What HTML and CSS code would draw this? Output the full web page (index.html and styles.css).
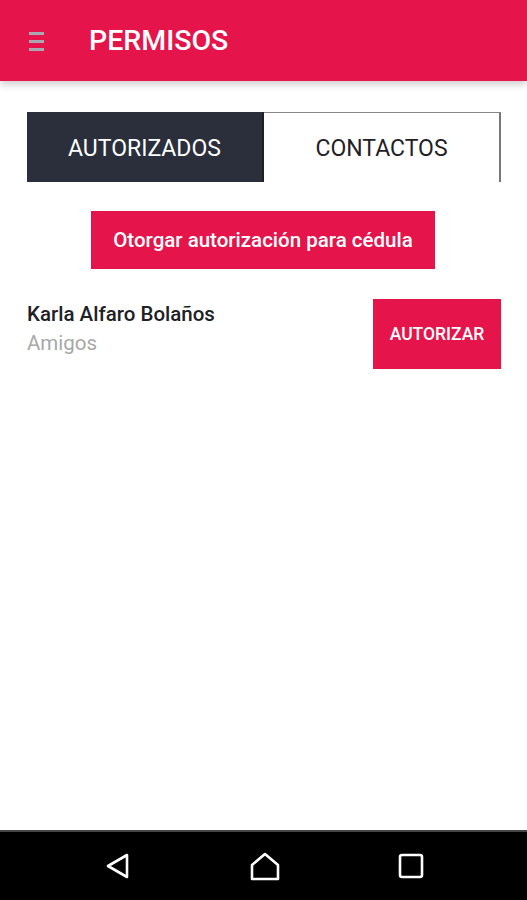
FILE: index.html
```html
<!DOCTYPE html>
<html lang="es">
<head>
    <meta charset="UTF-8">
    <meta name="viewport" content="width=device-width, initial-scale=1.0">
    <title>Permisos</title>
    <link rel="stylesheet" href="styles.css">
</head>
<body>
    <div class="screen">
        <header class="app-bar">
            <div class="menu-icon">
                <span></span>
                <span></span>
                <span></span>
            </div>
            <h1 class="title">PERMISOS</h1>
        </header>

        <main class="content">
            <div class="tabs">
                <div class="tab tab-active">AUTORIZADOS</div>
                <div class="tab">CONTACTOS</div>
            </div>

            <div class="grant-wrap">
                <button class="btn grant-btn">Otorgar autorización para cédula</button>
            </div>

            <div class="contact-row">
                <div class="contact-info">
                    <div class="contact-name">Karla Alfaro Bolaños</div>
                    <div class="contact-group">Amigos</div>
                </div>
                <button class="btn authorize-btn">AUTORIZAR</button>
            </div>
        </main>

        <nav class="nav-bar">
            <svg class="nav-icon" width="30" height="30" viewBox="0 0 30 30">
                <path d="M24 4 L5 15 L24 26 Z" fill="none" stroke="#fff" stroke-width="2.6" stroke-linejoin="round"/>
            </svg>
            <svg class="nav-icon" width="30" height="30" viewBox="0 0 30 30">
                <path d="M15 3 L28 14 L28 28 L2 28 L2 14 Z" fill="none" stroke="#fff" stroke-width="2.6" stroke-linejoin="round"/>
            </svg>
            <svg class="nav-icon" width="30" height="30" viewBox="0 0 30 30">
                <rect x="4" y="4" width="22" height="22" rx="2" fill="none" stroke="#fff" stroke-width="2.6"/>
            </svg>
        </nav>
    </div>
</body>
</html>
```

FILE: styles.css
```css
* {
    box-sizing: border-box;
}

body {
    margin: 0;
    font-family: Roboto, 'Liberation Sans', sans-serif;
    background-color: #fff;
}

.screen {
    height: 900px;
    display: flex;
    flex-direction: column;
}

.app-bar {
    height: 81px;
    background-color: #e5144a;
    display: flex;
    align-items: center;
    padding-left: 29px;
    box-shadow: 0 3px 8px rgba(0, 0, 0, 0.22);
    position: relative;
    z-index: 1;
}

.menu-icon {
    display: flex;
    flex-direction: column;
    gap: 5px;
    width: 15px;
    margin-top: 2px;
}

.menu-icon span {
    display: block;
    height: 3px;
    background-color: #a9a8b0;
}

.title {
    margin: 0 0 0 45px;
    color: #fff;
    font-size: 28.5px;
    font-weight: 500;
}

.content {
    flex: 1;
    padding: 31px 26px 0 27px;
}

.tabs {
    display: flex;
    height: 70px;
}

.tab {
    flex: 1;
    display: flex;
    align-items: center;
    justify-content: center;
    font-size: 23px;
    font-weight: 400;
    color: #1f2126;
    border-top: 1px solid #888;
    border-right: 2px solid #777;
    padding-top: 2px;
}

.tab-active {
    background-color: #2b2f3c;
    color: #fff;
    border-top: 1px solid #2b2f3c;
    border-right: 2px solid #1e212a;
}

.grant-wrap {
    display: flex;
    justify-content: center;
    margin-top: 29px;
    padding-right: 2px;
}

.btn {
    border: none;
    background-color: #e5144a;
    color: #fff;
    font-family: inherit;
    font-weight: 500;
    cursor: pointer;
}

.grant-btn {
    width: 344px;
    height: 58px;
    font-size: 20.5px;
}

.contact-row {
    display: flex;
    justify-content: space-between;
    align-items: flex-start;
    margin-top: 30px;
}

.contact-info {
    padding-top: 2px;
}

.contact-name {
    font-size: 20.5px;
    font-weight: 500;
    color: #202124;
    line-height: 26px;
}

.contact-group {
    font-size: 20.5px;
    color: #a8a8a8;
    line-height: 26px;
    margin-top: 3px;
}

.authorize-btn {
    width: 128px;
    height: 70px;
    font-size: 17.5px;
}

.nav-bar {
    height: 70px;
    background-color: #000;
    border-top: 2px solid #444;
    display: flex;
    align-items: center;
    justify-content: space-between;
    padding: 0 101px 0 103px;
}
```
